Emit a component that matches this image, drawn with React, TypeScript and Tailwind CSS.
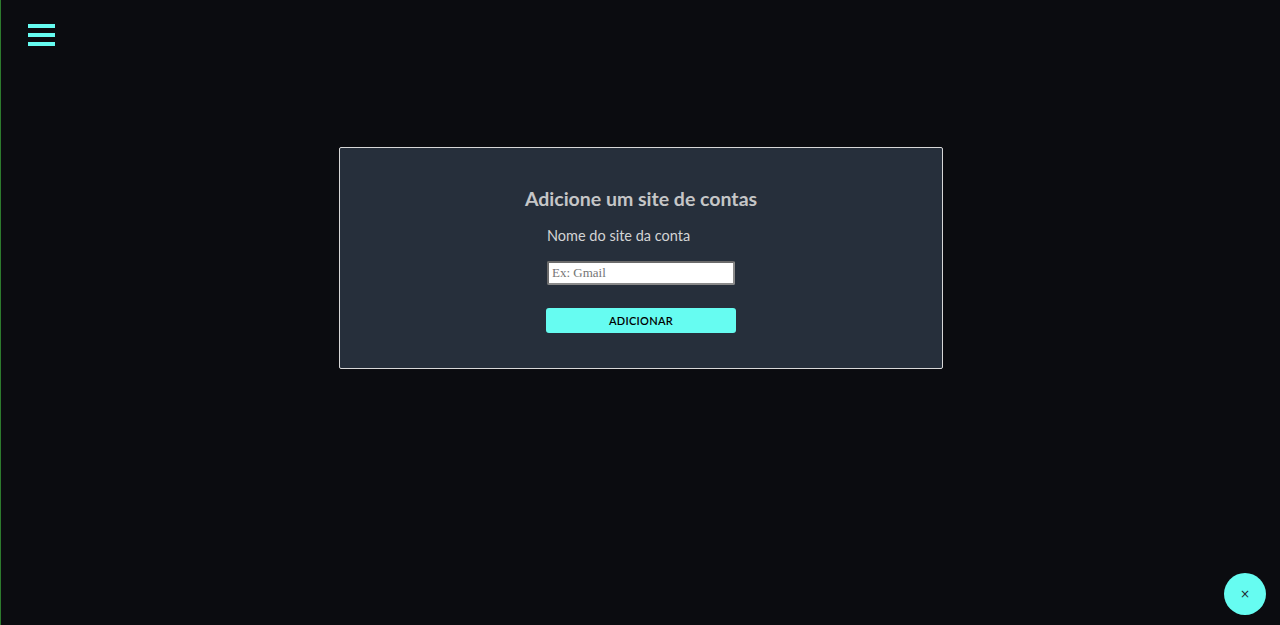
import React from 'react';

const font = "font-['Comic_Sans_MS','Lato',sans-serif]";

export default function App() {
  return (
    <div className={`relative h-[625px] w-full overflow-hidden bg-[#0b0c10] border-l border-[#2d7a2d] ${font}`}>
      {/* menu button */}
      <div className="pl-[27px] pt-[24px]">
        <button className="flex w-[27px] flex-col gap-[5px]" aria-label="menu">
          <span className="block h-[4px] w-[27px] bg-[#66fcf1]" />
          <span className="block h-[4px] w-[27px] bg-[#66fcf1]" />
          <span className="block h-[4px] w-[27px] bg-[#66fcf1]" />
        </button>
      </div>

      {/* form card */}
      <div className="mt-[101px] flex justify-center pr-[1px]">
        <div className="ml-[2px] flex h-[222px] w-[604px] flex-col items-center rounded-[2px] border border-[#d8d8d8] bg-[#262f3b] pt-[38px]">
          <h2 className="text-[19.5px] font-bold leading-[26px] text-[#c5c6c7]">Adicione um site de contas</h2>
          <div className="mt-[14px] flex w-[190px] flex-col">
            <label className="pl-[1px] text-[14.5px] leading-[20px] text-[#d3d4d5]">Nome do site da conta</label>
            <input
              type="text"
              placeholder="Ex: Gmail"
              className="mt-[15px] ml-[1px] h-[24px] w-[188px] rounded-[2px] border-2 border-t-[#6b6b6b] border-l-[#6b6b6b] border-r-[#8a8a8a] border-b-[#8a8a8a] bg-white px-[3px] font-['Liberation_Serif',serif] text-[13px] text-black placeholder:text-[#757575] outline-none"
            />
            <button className="mt-[23px] h-[25px] w-[190px] rounded-[3px] bg-[#66fcf1] text-[11px] font-semibold leading-[25px] tracking-[0.3px] text-black">
              ADICIONAR
            </button>
          </div>
        </div>
      </div>

      {/* floating close button */}
      <button className="absolute right-[14px] bottom-[10px] flex h-[42px] w-[42px] items-center justify-center rounded-full bg-[#66fcf1] font-['DejaVu_Sans',sans-serif] text-[12px] text-[#1f2833]">
        ×
      </button>
    </div>
  );
}
